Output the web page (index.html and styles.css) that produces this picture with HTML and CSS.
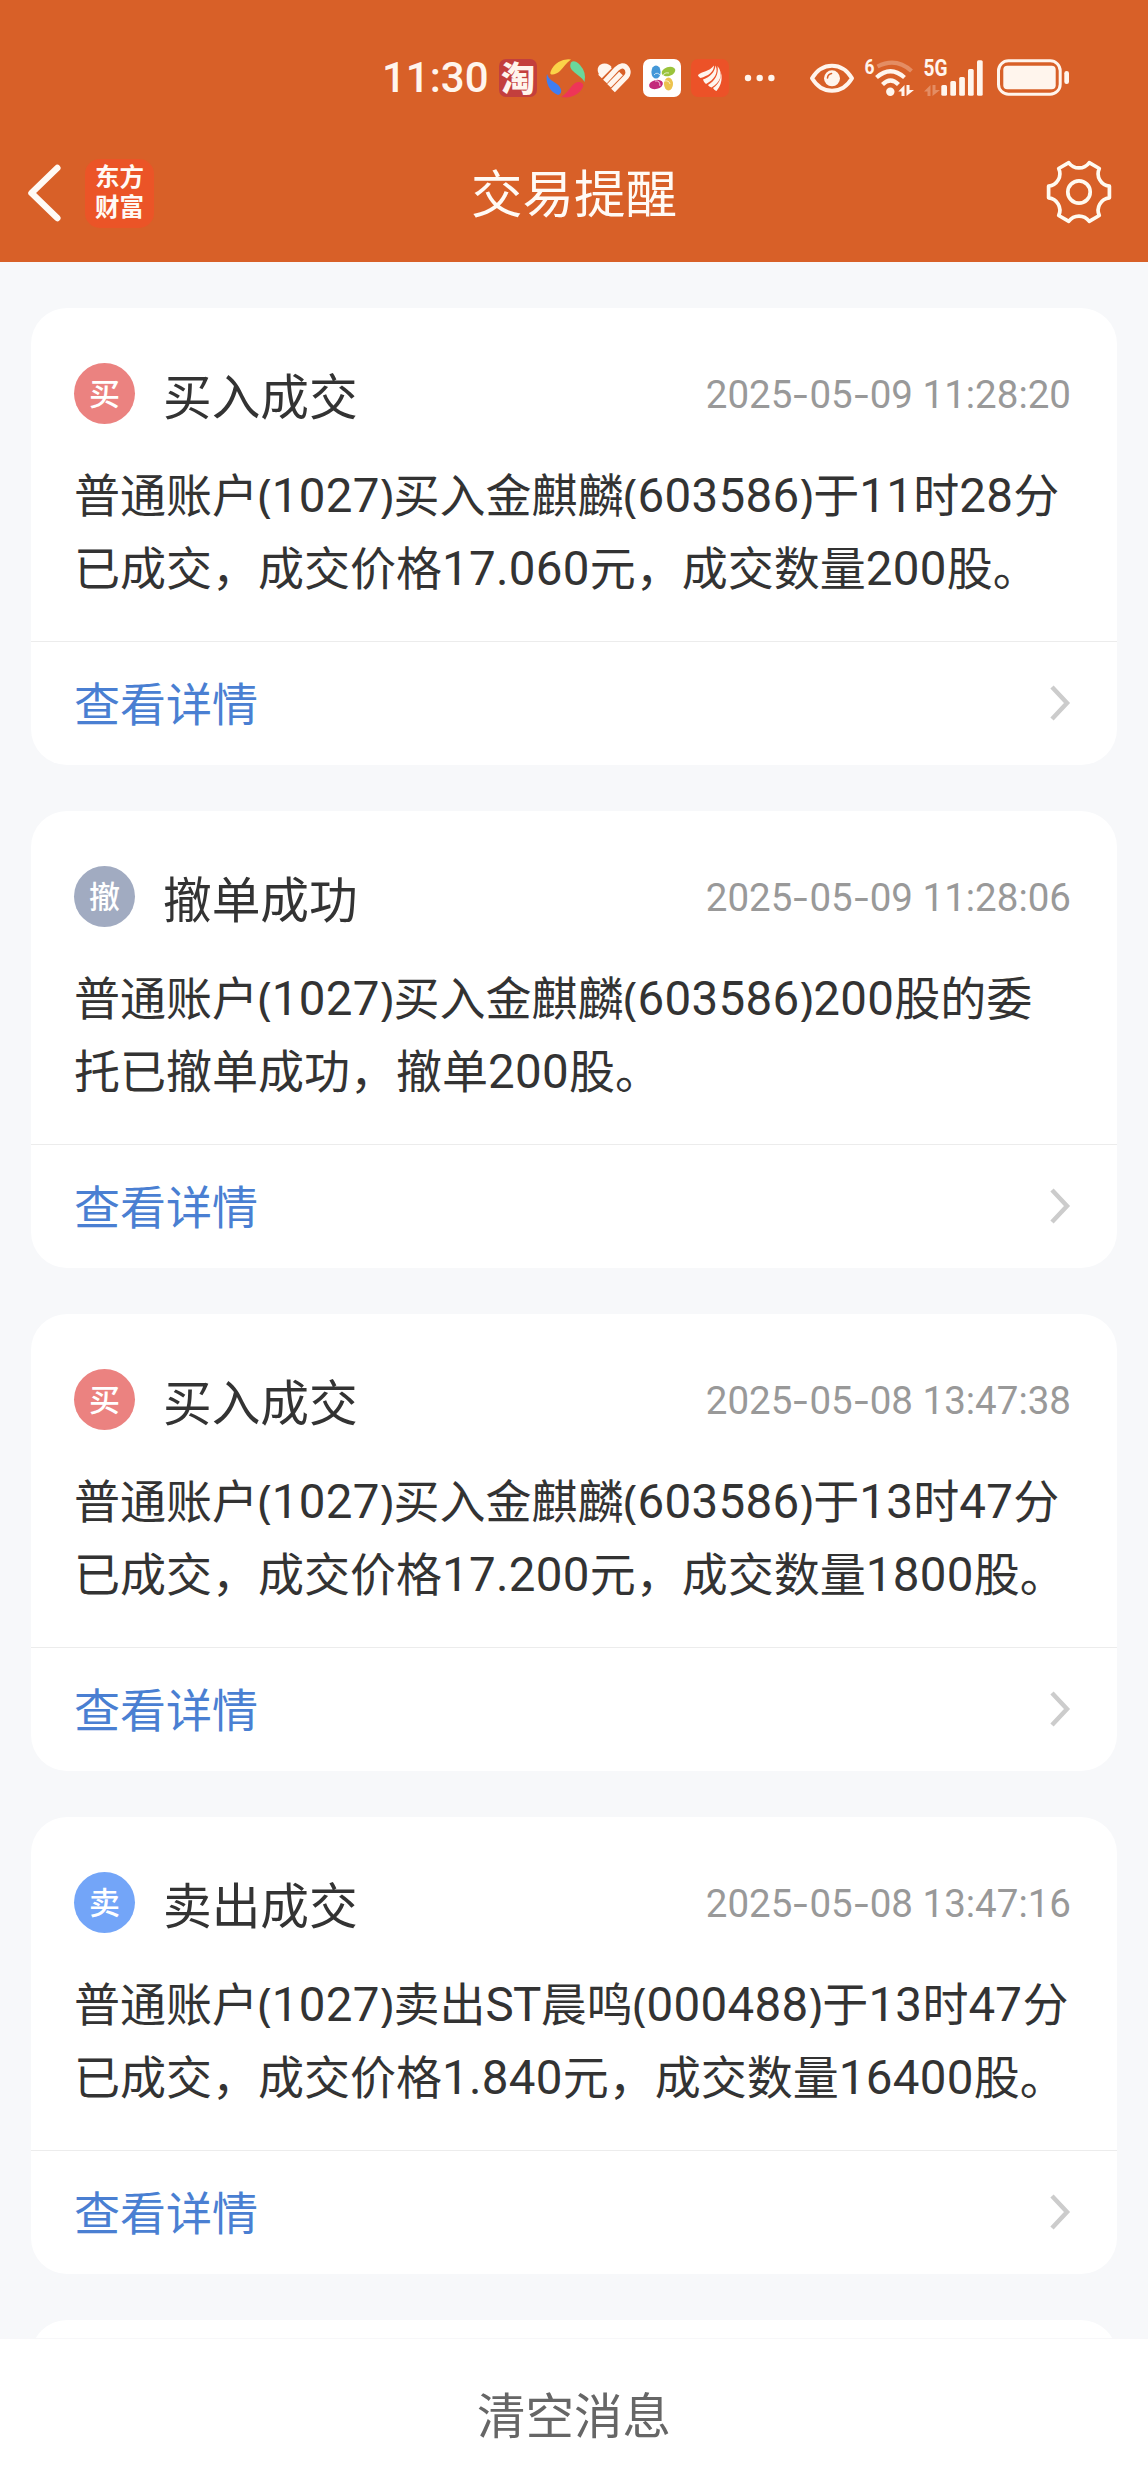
FILE: index.html
```
<!DOCTYPE html>
<html lang="zh-CN">
<head>
    <meta charset="UTF-8">
    <meta name="viewport" content="width=device-width, initial-scale=1.0">
    <title>交易提醒</title>
    <link rel="stylesheet" href="styles.css">
</head>
<body>
    <header class="header">
        <!-- Status bar -->
        <div class="status-bar">
            <span class="clock">11:30</span>
            <span class="app-icon taobao">淘</span>
            <svg class="wheel" width="40" height="40" viewBox="0 0 40 40">
                <path d="M4.500 14A19 19 0 0 1 25 1.500C20 5 18 9 14 13 10 17 3 18 4.500 14z" fill="#fbd348"/>
                <path d="M24.500 6C25 1.500 31 3 34 7A19 19 0 0 1 38.500 24C36 19 31 17 27 13 24 10 24 8 24.500 6z" fill="#6bd79b"/>
                <path d="M37 29A19 19 0 0 1 15 38.800C20 36 22 33 25 29 28 25 32 23 35 24.500 38 26 37.500 28 37 29z" fill="#ee3558"/>
                <path d="M1 16C3 22 7 23 11 26 17 31 16 36 12 37 4 34-1 25 1 16z" fill="#3f7df2"/>
            </svg>
            <svg class="heart" width="36" height="32" viewBox="0 0 36 32" fill="none" stroke="#fff5ed" stroke-width="5.200">
                <path d="M17 28.500 30.500 14.500C34 10 31 3.500 26 3.800 23.500 4 22 5.500 20.500 7L9 19.500"/>
                <path d="M4 14.500 14 4.500"/>
                <path d="M13 23.700 25 11.500"/>
                <path d="M3.800 13.500C-1 7 3 1.500 8.500 1.500 12 1.500 14.500 3.500 15.500 5L6 14z" fill="#fff5ed" stroke="none"/>
            </svg>
            <svg class="app-icon" width="38" height="38" viewBox="0 0 38 38">
                <rect width="38" height="38" rx="7" fill="#fff"/>
                <ellipse cx="13" cy="13" rx="4.600" ry="6.600" fill="#4498d8"/>
                <ellipse cx="25.500" cy="12.500" rx="7" ry="4.500" fill="#9ac33c" transform="rotate(-18 25.500 12.500)"/>
                <ellipse cx="13" cy="25.500" rx="7" ry="4.500" fill="#c32a7b" transform="rotate(-14 13 25.500)"/>
                <ellipse cx="25.500" cy="25" rx="4.500" ry="6.500" fill="#ecc34e"/>
                <path d="M11 16q3-4 7 1M20 17q1-4 6-3M12 22q5-1 5 5M21 22q5-1 6 3" fill="none" stroke="#fff" stroke-width=".7"/>
            </svg>
            <svg class="app-icon" width="38" height="38" viewBox="0 0 38 38">
                <rect width="38" height="38" rx="7" fill="#ec5228"/>
                <path d="M7 16C11 12 18 13 23 6.500 23 13 17 17 9.500 19 8 18 7 17 7 16zM12 20.500C19 18 24 13 24.500 6.500 28 14 23 21 15 25 13.500 24 12.500 22 12 20.500zM17 26C24 22 28 15 26.500 7 33 15 29 24 20.500 28.500 19 28 17.500 27 17 26zM22 29C28 25 30 20 30 14 32 21 29 28 25.500 32 24 31.500 22.500 30 22 29z" fill="#fff5ed"/>
            </svg>
            <svg class="dots" width="32" height="8" viewBox="0 0 32 8" fill="#fff5ed">
                <circle cx="4" cy="4" r="3.200"/>
                <circle cx="15.700" cy="4" r="3.200"/>
                <circle cx="27.400" cy="4" r="3.200"/>
            </svg>
            <svg class="eye" width="48" height="32" viewBox="0 0 48 32">
                <path d="M4 16.300C14-.5 34-.5 44 16.300 34 33 14 33 4 16.300z" fill="none" stroke="#fff5ed" stroke-width="4" stroke-linejoin="round"/>
                <circle cx="24" cy="16.300" r="8" fill="#fff5ed"/>
                <path d="M19.500 16a5 5 0 0 1 4-4.500" fill="none" stroke="#d86028" stroke-width="1.600" stroke-linecap="round"/>
            </svg>
            <svg class="wifi" width="52" height="42" viewBox="0 0 52 42">
                <text x="0.500" y="17" class="wifi-gen" textLength="10" lengthAdjust="spacingAndGlyphs">6</text>
                <g fill="none" stroke="#fff5ed" stroke-width="4.200">
                    <path d="M13.500 9.500Q32 0 47.500 14" stroke-opacity=".3"/>
                    <path d="M12.500 20.500Q26.500 8 40.500 20.500"/>
                    <path d="M18.500 27.500Q26.500 19.500 34.500 27.500"/>
                </g>
                <circle cx="26.300" cy="34.800" r="4.200" fill="#fff5ed"/>
                <path d="M40.500 28v11h-3v-4.500h-3.200zM42.500 39V28h3v5h4.500z" fill="#fff5ed"/>
            </svg>
            <svg class="signal" width="62" height="42" viewBox="0 0 62 42" fill="#fff5ed">
                <text x="1.500" y="19" class="net-type" textLength="24" lengthAdjust="spacingAndGlyphs">5G</text>
                <path d="M8.500 28v11h-3v-4.500H2zM10.500 39V28h3v5H18z" opacity=".3"/>
                <rect x="19.300" y="28" width="5.700" height="10.700" rx="1.500"/>
                <rect x="28.300" y="24" width="5.700" height="14.700" rx="1.500"/>
                <rect x="37.200" y="20" width="5.700" height="18.700" rx="1.500"/>
                <rect x="46" y="12" width="5.700" height="26.700" rx="1.500"/>
                <rect x="55" y="3.300" width="5.700" height="35.400" rx="1.500"/>
            </svg>
            <svg class="battery" width="75" height="40" viewBox="0 0 75 40">
                <rect x="2.500" y="2.800" width="61.700" height="33.400" rx="10" fill="none" stroke="#fff5ed" stroke-width="3"/>
                <rect x="7.300" y="7.700" width="52.400" height="23.600" rx="4" fill="#fff5ed"/>
                <rect x="68.300" y="13" width="4.700" height="13" rx="2.300" fill="#fff5ed"/>
            </svg>
        </div>
        <!-- Title bar -->
        <div class="nav-bar">
            <div class="nav-left">
                <svg width="36" height="60" viewBox="0 0 36 60">
                    <path d="M31.300 5 5.500 30l25.800 25" fill="none" stroke="#fffaf5" stroke-width="6.500" stroke-linecap="round" stroke-linejoin="round"/>
                </svg>
                <div class="brand"><span>东方</span><span>财富</span></div>
            </div>
            <h1 class="title">交易提醒</h1>
            <svg class="settings" width="68" height="68" viewBox="-34 -34 68 68" fill="none" stroke="#fffaf0" stroke-width="3.700" stroke-linejoin="round">
                <path d="M30.400-5.800V5.800A12.500 12.500 0 0 0 20.300 23.500L10.200 29.300A12.500 12.500 0 0 0-10.200 29.300L-20.300 23.500A12.500 12.500 0 0 0-30.400 5.800V-5.800A12.500 12.500 0 0 0-20.300-23.500L-10.200-29.300A12.500 12.500 0 0 0 10.200-29.300L20.300-23.500A12.500 12.500 0 0 0 30.400-5.800Z"/>
                <circle r="11.200"/>
            </svg>
        </div>
    </header>

    <main class="list">
        <div class="card">
            <div class="card-head">
                <span class="badge buy">买</span>
                <h2>买入成交</h2>
                <time>2025<i>-</i>05<i>-</i>09 11:28:20</time>
            </div>
            <p>普通账户(<b>1027</b>)买入金麒麟(<b>603586</b>)于<b>11</b>时<b>28</b>分<br>已成交，成交价格<b>17.060</b>元，成交数量<b>200</b>股。</p>
            <a class="detail">查看详情<svg width="24" height="40" viewBox="0 0 24 40"><path d="M4 4l15 16L4 36"/></svg></a>
        </div>

        <div class="card">
            <div class="card-head">
                <span class="badge cancel">撤</span>
                <h2>撤单成功</h2>
                <time>2025<i>-</i>05<i>-</i>09 11:28:06</time>
            </div>
            <p>普通账户(<b>1027</b>)买入金麒麟(<b>603586</b>)<b>200</b>股的委<br>托已撤单成功，撤单<b>200</b>股。</p>
            <a class="detail">查看详情<svg width="24" height="40" viewBox="0 0 24 40"><path d="M4 4l15 16L4 36"/></svg></a>
        </div>

        <div class="card">
            <div class="card-head">
                <span class="badge buy">买</span>
                <h2>买入成交</h2>
                <time>2025<i>-</i>05<i>-</i>08 13:47:38</time>
            </div>
            <p>普通账户(<b>1027</b>)买入金麒麟(<b>603586</b>)于<b>13</b>时<b>47</b>分<br>已成交，成交价格<b>17.200</b>元，成交数量<b>1800</b>股。</p>
            <a class="detail">查看详情<svg width="24" height="40" viewBox="0 0 24 40"><path d="M4 4l15 16L4 36"/></svg></a>
        </div>

        <div class="card">
            <div class="card-head">
                <span class="badge sell">卖</span>
                <h2>卖出成交</h2>
                <time>2025<i>-</i>05<i>-</i>08 13:47:16</time>
            </div>
            <p>普通账户(<b>1027</b>)卖出<b class="st">ST</b>晨鸣(<b>000488</b>)于<b>13</b>时<b>47</b>分<br>已成交，成交价格<b>1.840</b>元，成交数量<b>16400</b>股。</p>
            <a class="detail">查看详情<svg width="24" height="40" viewBox="0 0 24 40"><path d="M4 4l15 16L4 36"/></svg></a>
        </div>

        <div class="card"></div>
    </main>

    <footer class="footer">清空消息</footer>
</body>
</html>
```
FILE: styles.css
```
* {
    box-sizing: border-box;
}
body {
    margin: 0;
    height: 2492px;
    display: flex;
    flex-direction: column;
    overflow: hidden;
    background: #f7f8fa;
    color: #333;
    font-family: Roboto, "Noto Sans CJK SC", sans-serif;
}
svg {
    display: block;
    flex-shrink: 0;
    overflow: visible;
}

/* header */
.header {
    height: 262px;
    flex-shrink: 0;
    background: #d86028;
    color: #fffaf5;
}
.status-bar {
    height: 124px;
    padding: 32px 0 0 382px;
    display: flex;
    align-items: center;
    color: #fff5ed;
}
.clock {
    width: 117px;
    font-size: 42px;
    font-weight: 500;
    line-height: 1;
}
.app-icon {
    width: 38px;
    height: 38px;
    border-radius: 7px;
}
.taobao {
    background: #c33f3d;
    font: 900 34px/36px "Noto Sans CJK SC", sans-serif;
    text-align: center;
}
.wheel {
    margin-left: 9px;
}
.heart {
    margin: 0 11px 0 10px;
}
.app-icon + .app-icon {
    margin-left: 10px;
}
.dots {
    margin-left: 15px;
}
.eye {
    margin-left: 32px;
}
.wifi {
    margin-left: 8px;
}
.signal {
    margin-left: 6px;
}
.battery {
    margin-left: 12px;
}
.wifi-gen {
    font: 700 21px Roboto, sans-serif;
    fill: #fff5ed;
}
.net-type {
    font: 700 23px Roboto, sans-serif;
}
.nav-bar {
    height: 138px;
    padding: 0 35px 0 26px;
    display: grid;
    grid-template-columns: 1fr auto 1fr;
    align-items: center;
}
.nav-left {
    display: flex;
    align-items: center;
    gap: 23px;
}
.brand {
    width: 69px;
    height: 69px;
    padding-bottom: 5px;
    border-radius: 15px;
    background: #eb5427;
    display: flex;
    flex-direction: column;
    align-items: center;
    justify-content: center;
    font: 700 24.5px/30px "Noto Sans CJK SC", sans-serif;
}
.title {
    margin: 0;
    padding: 0 0 5px 9px;
    font-size: 51.5px;
    font-weight: 400;
}
.settings {
    justify-self: end;
    margin-bottom: 2px;
}

/* message list */
.list {
    flex: 1;
    min-height: 0;
    overflow: hidden;
    padding: 46px 31px 0;
    display: flex;
    flex-direction: column;
    gap: 46px;
}
.card {
    height: 457px;
    flex-shrink: 0;
    border-radius: 36px;
    background: #fff;
}
.card-head {
    display: flex;
    align-items: center;
    height: 61px;
    margin: 55px 46px 0 43px;
}
.badge {
    width: 61px;
    height: 61px;
    border-radius: 50%;
    color: #fff;
    font: 500 31px/57px "Noto Sans CJK SC", sans-serif;
    text-align: center;
}
.buy {
    background: #eb8280;
}
.cancel {
    background: #a1abc1;
}
.sell {
    background: #73a5f8;
}
.card-head h2 {
    margin: 1px 0 0 28px;
    font: 400 48.7px/60px "Noto Sans CJK SC", sans-serif;
}
.card-head time {
    margin: 1px 0 0 auto;
    color: #999;
    font-size: 38.5px;
}
.card-head time i {
    display: inline-block;
    width: 17px;
    font-style: normal;
    text-align: center;
    transform: scaleX(1.35);
}
.card p {
    height: 217px;
    margin: 0;
    padding: 34px 0 0 43px;
    white-space: nowrap;
    font: 400 46px/72.5px "Noto Sans", "Noto Sans CJK SC", sans-serif;
}
.card p b {
    font-family: Roboto, sans-serif;
    font-weight: 400;
    font-size: 47.5px;
    line-height: 1;
    letter-spacing: 0.3px;
}
.card p .st {
    letter-spacing: -0.7px;
}
.detail {
    height: 124px;
    padding: 0 45px 2px 43px;
    border-top: 1px solid #ececec;
    display: flex;
    align-items: center;
    justify-content: space-between;
    color: #4a7fd2;
    font: 400 46px/60px "Noto Sans", "Noto Sans CJK SC", sans-serif;
}
.detail path {
    fill: none;
    stroke: #ccc;
    stroke-width: 4.5;
}

/* clear all */
.footer {
    height: 154px;
    flex-shrink: 0;
    border-top: 1px solid #f7f7f9;
    background: #fff;
    color: #666;
    font-size: 48.5px;
    line-height: 157px;
    text-align: center;
}
```
